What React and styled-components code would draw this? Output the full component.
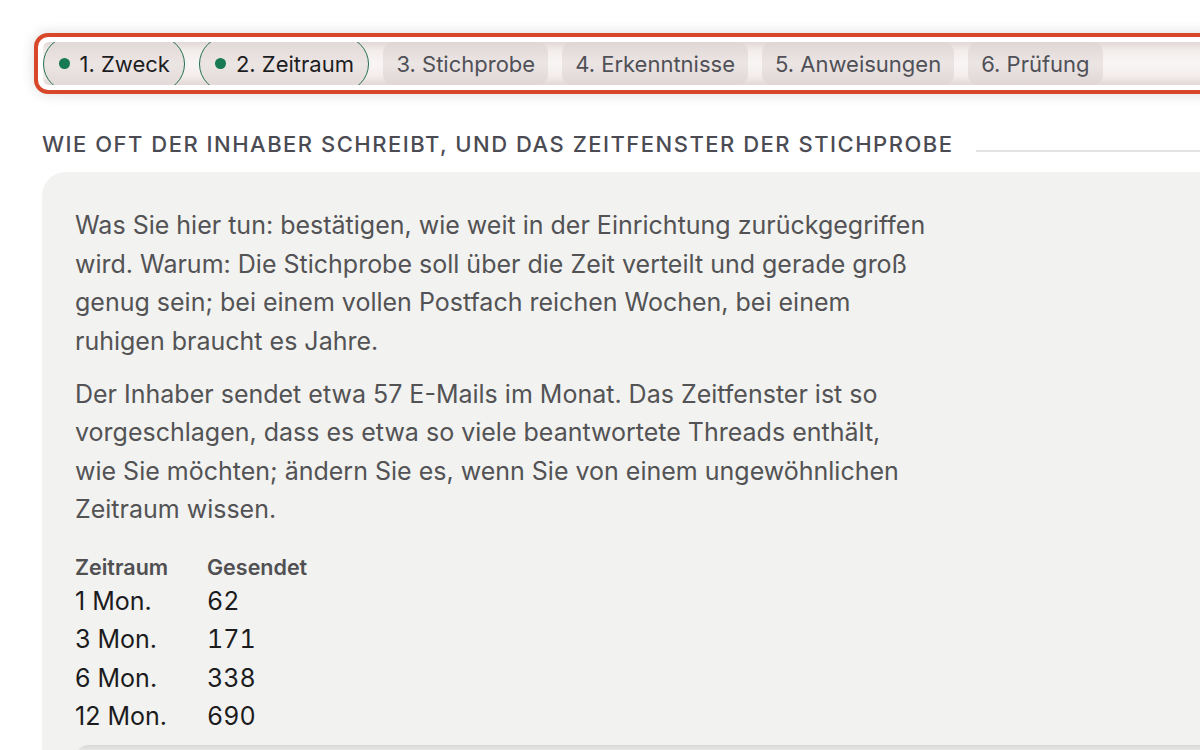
import React from 'react';
import styled, { createGlobalStyle } from 'styled-components';

const GlobalStyle = createGlobalStyle`
  html, body {
    margin: 0;
    padding: 0;
    background: #ffffff;
    overflow: hidden;
  }
  body {
    font-family: Inter, "Noto Sans", sans-serif;
    -webkit-font-smoothing: antialiased;
  }
`;

const steps = [
  { label: '1. Zweck', done: true },
  { label: '2. Zeitraum', done: true },
  { label: '3. Stichprobe' },
  { label: '4. Erkenntnisse' },
  { label: '5. Anweisungen' },
  { label: '6. Prüfung' }
];

const rows = [
  { period: '1 Mon.', sent: 62 },
  { period: '3 Mon.', sent: 171 },
  { period: '6 Mon.', sent: 338 },
  { period: '12 Mon.', sent: 690 }
];

const App = () => (
  <>
    <GlobalStyle />
    <Page>
      <StepNav>
        <StepStrip>
          {steps.map((step) => (
            <Step key={step.label} done={step.done}>
              {step.done && <Dot />}
              {step.label}
            </Step>
          ))}
        </StepStrip>
      </StepNav>

      <SectionHeading>
        <span>Wie oft der Inhaber schreibt, und das Zeitfenster der Stichprobe</span>
        <Rule />
      </SectionHeading>

      <Panel>
        <Text>
          Was Sie hier tun: bestätigen, wie weit in der Einrichtung zurückgegriffen
          wird. Warum: Die Stichprobe soll über die Zeit verteilt und gerade groß
          genug sein; bei einem vollen Postfach reichen Wochen, bei einem ruhigen
          braucht es Jahre.
        </Text>
        <Text>
          Der Inhaber sendet etwa 57 E-Mails im Monat. Das Zeitfenster ist so
          vorgeschlagen, dass es etwa so viele beantwortete Threads enthält, wie
          Sie möchten; ändern Sie es, wenn Sie von einem ungewöhnlichen Zeitraum
          wissen.
        </Text>

        <VolumeTable>
          <thead>
            <tr>
              <Th>Zeitraum</Th>
              <Th>Gesendet</Th>
            </tr>
          </thead>
          <tbody>
            {rows.map((row) => (
              <tr key={row.period}>
                <Td>{row.period}</Td>
                <Td numeric>{row.sent}</Td>
              </tr>
            ))}
          </tbody>
        </VolumeTable>

        <Card />
      </Panel>
    </Page>
  </>
);

const Page = styled.div`
  width: 1340px;
  padding: 33px 0 0 42px;
  box-sizing: border-box;
`;

const StepNav = styled.nav`
  margin-left: -8px;
  border: 4px solid #d9472b;
  border-radius: 14px;
  padding: 5px;
  background: #ffffff;
  box-shadow: 0 0 14px rgba(0, 0, 0, 0.14);
`;

const StepStrip = styled.div`
  display: flex;
  align-items: center;
  gap: 14px;
  height: 43px;
  overflow: hidden;
  border-radius: 6px;
  background: linear-gradient(
    180deg,
    #e2d8d6 0%,
    #f3eeed 22%,
    #f8f5f4 50%,
    #f3eeed 78%,
    #e2d8d6 100%
  );
`;

const Step = styled.div`
  flex: none;
  display: flex;
  align-items: center;
  gap: 10px;
  box-sizing: border-box;
  height: ${({ done }) => (done ? '56px' : '43px')};
  padding: 0 ${({ done }) => (done ? '14.5px' : '13px')};
  border-radius: ${({ done }) => (done ? '28px' : '10px')};
  border: ${({ done }) => (done ? '1.5px solid #23704d' : 'none')};
  background: linear-gradient(180deg, #e0d7d5 0%, #ebe5e4 50%, #e0d7d5 100%);
  color: ${({ done }) => (done ? '#1d1d1f' : '#505057')};
  font-size: 22px;
  line-height: 1;
  white-space: nowrap;
`;

const Dot = styled.span`
  width: 11px;
  height: 11px;
  border-radius: 50%;
  background: #177a52;
`;

const SectionHeading = styled.h2`
  display: flex;
  align-items: flex-end;
  gap: 22px;
  margin: 38px 0 16px;
  font-size: 22px;
  font-weight: 500;
  line-height: 24px;
  letter-spacing: 1.5px;
  text-transform: uppercase;
  color: #4b4b54;
  white-space: nowrap;
`;

const Rule = styled.span`
  flex: 1;
  height: 2px;
  margin-bottom: 4px;
  background: #e3e3e3;
`;

const Panel = styled.section`
  padding: 34px 33px 0;
  border-radius: 24px 0 0 0;
  background: #f2f2f0;
  min-height: 600px;
`;

const Text = styled.p`
  max-width: 851px;
  margin: 0 0 14.5px;
  font-size: 25px;
  line-height: 38.5px;
  color: #535355;
`;

const VolumeTable = styled.table`
  margin-top: 23px;
  border-collapse: collapse;
  font-family: Inter, "Noto Sans", sans-serif;
`;

const Th = styled.th`
  width: 132px;
  padding: 0;
  text-align: left;
  font-size: 21.5px;
  font-weight: 600;
  line-height: 30px;
  color: #505053;
`;

const Td = styled.td`
  padding: 0;
  font-size: 25px;
  line-height: 38.5px;
  color: #1c1c1e;
  font-variant-numeric: ${({ numeric }) => (numeric ? 'tabular-nums' : 'normal')};
`;

const Card = styled.div`
  height: 40px;
  margin-top: 9px;
  border-radius: 14px 0 0 0;
  background: linear-gradient(180deg, #d9d9d7 0%, #e8e8e6 6px, #efefed 100%);
`;

export default App;
